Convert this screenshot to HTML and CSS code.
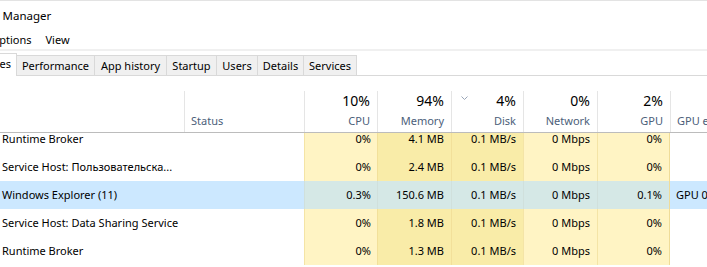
FILE: index.html
```html
<!DOCTYPE html>
<html>
<head>
<meta charset="utf-8">
<title>Task Manager</title>
<link rel="stylesheet" href="styles.css">
</head>
<body>
<div class="viewport">
  <div class="window">
    <div class="titlebar"><span class="title">Task Manager</span></div>
    <div class="menubar">
      <span class="menu">File</span>
      <span class="menu">Options</span>
      <span class="menu">View</span>
    </div>
    <div class="menusep"></div>
    <div class="tabstrip">
      <div class="tab active t-proc">Processes</div>
      <div class="tab t-perf">Performance</div>
      <div class="tab t-hist">App history</div>
      <div class="tab t-start">Startup</div>
      <div class="tab t-users">Users</div>
      <div class="tab t-det">Details</div>
      <div class="tab t-serv">Services</div>
    </div>
    <div class="spacer"></div>

    <div class="grid header">
      <div class="hcell name"></div>
      <div class="hcell status"><span class="label">Status</span></div>
      <div class="hcell num"><span class="pct">10%</span><span class="label">CPU</span></div>
      <div class="hcell num"><span class="pct">94%</span><span class="label">Memory</span></div>
      <div class="hcell num sorted">
        <svg class="sortarrow" width="7" height="4" viewBox="0 0 7 4"><polyline points="0.5,0.5 3.5,3.5 6.5,0.5" fill="none" stroke="#9aa6b8" stroke-width="1"/></svg>
        <span class="pct">4%</span><span class="label">Disk</span>
      </div>
      <div class="hcell num"><span class="pct">0%</span><span class="label">Network</span></div>
      <div class="hcell num"><span class="pct">2%</span><span class="label">GPU</span></div>
      <div class="hcell engine"><span class="label">GPU engine</span></div>
    </div>

    <div class="body">
      <div class="rows">
        <div class="grid row">
          <div class="cell name">Runtime Broker</div>
          <div class="cell status"></div>
          <div class="cell num light cpu">0%</div>
          <div class="cell num dark">4.1 MB</div>
          <div class="cell num dark">0.1 MB/s</div>
          <div class="cell num light">0 Mbps</div>
          <div class="cell num light gpu">0%</div>
          <div class="cell engine"></div>
        </div>
        <div class="grid row">
          <div class="cell name">Service Host: Пользовательска...</div>
          <div class="cell status"></div>
          <div class="cell num light cpu">0%</div>
          <div class="cell num dark">2.4 MB</div>
          <div class="cell num dark">0.1 MB/s</div>
          <div class="cell num light">0 Mbps</div>
          <div class="cell num light gpu">0%</div>
          <div class="cell engine"></div>
        </div>
        <div class="grid row selected">
          <div class="cell name">Windows Explorer (11)</div>
          <div class="cell status"></div>
          <div class="cell num light cpu">0.3%</div>
          <div class="cell num dark">150.6 MB</div>
          <div class="cell num dark">0.1 MB/s</div>
          <div class="cell num light">0 Mbps</div>
          <div class="cell num light gpu">0.1%</div>
          <div class="cell engine">GPU 0 - 3D</div>
        </div>
        <div class="grid row">
          <div class="cell name">Service Host: Data Sharing Service</div>
          <div class="cell status"></div>
          <div class="cell num light cpu">0%</div>
          <div class="cell num dark">1.8 MB</div>
          <div class="cell num dark">0.1 MB/s</div>
          <div class="cell num light">0 Mbps</div>
          <div class="cell num light gpu">0%</div>
          <div class="cell engine"></div>
        </div>
        <div class="grid row">
          <div class="cell name">Runtime Broker</div>
          <div class="cell status"></div>
          <div class="cell num light cpu">0%</div>
          <div class="cell num dark">1.3 MB</div>
          <div class="cell num dark">0.1 MB/s</div>
          <div class="cell num light">0 Mbps</div>
          <div class="cell num light gpu">0%</div>
          <div class="cell engine"></div>
        </div>
      </div>
    </div>
  </div>
</div>
</body>
</html>
```
FILE: styles.css
```css
html, body {
  margin: 0;
  padding: 0;
  background: #ffffff;
}

body {
  font-family: "Noto Sans", "Open Sans", sans-serif;
  font-size: 11px;
  color: #000000;
}

.viewport {
  width: 707px;
  height: 267px;
  overflow: hidden;
}

/* the screenshot is a crop of a wider window */
.window {
  margin-left: -48px;
  width: 820px;
  border-top: 1px solid #e3e3e3;
}

.titlebar {
  height: 29px;
  line-height: 29px;
  padding-left: 24px;
  font-size: 11.5px;
}

.menubar {
  height: 19px;
  line-height: 19px;
  display: flex;
}

.menu {
  padding: 0 7px;
}

.menusep {
  height: 2px;
  background: #f0f0f0;
}

.tabstrip {
  height: 24px;
  display: flex;
  align-items: flex-end;
  border-bottom: 1px solid #d9d9d9;
  padding-left: 2px;
}

.tab {
  box-sizing: border-box;
  height: 20px;
  line-height: 19px;
  text-align: center;
  background: #f0f0f0;
  border-top: 1px solid #d9d9d9;
  border-right: 1px solid #d9d9d9;
  white-space: nowrap;
}

.tab.active {
  height: 23px;
  line-height: 19px;
  margin-bottom: -1px;
  background: #ffffff;
  border-left: 1px solid #d9d9d9;
}

.t-proc { width: 63px; }
.t-perf { width: 78px; }
.t-hist { width: 72px; }
.t-start { width: 50px; }
.t-users { width: 41px; }
.t-det { width: 46px; }
.t-serv { width: 53px; }

.spacer {
  height: 15px;
}

.grid {
  display: grid;
  grid-template-columns: 232px 120px 73px 74px 72px 74px 73px 152px;
}

.header {
  height: 42px;
  box-sizing: border-box;
  border-bottom: 1px solid #bcbcbc;
}

.hcell {
  box-sizing: border-box;
  border-left: 1px solid #e5e5e5;
  display: flex;
  flex-direction: column;
  justify-content: flex-end;
  padding-bottom: 3px;
  position: relative;
}

.hcell.name {
  border-left: none;
}

.hcell.status,
.hcell.engine {
  padding-left: 6px;
}

.hcell.num {
  align-items: flex-end;
  padding-right: 7px;
}

.pct {
  font-size: 14px;
  line-height: 19px;
  margin-bottom: 3px;
  color: #000000;
}

.label {
  color: #4c607a;
  line-height: 16px;
  white-space: nowrap;
}

.sortarrow {
  position: absolute;
  left: 9px;
  top: 5px;
}

.body {
  height: 134px;
  overflow: hidden;
}

.rows {
  margin-top: -8px;
}

.row {
  height: 28px;
}

.cell {
  box-sizing: border-box;
  line-height: 28px;
  white-space: nowrap;
  overflow: hidden;
}

.cell.name {
  padding-left: 50px;
}

.cell.engine {
  padding-left: 6px;
}

.cell.num {
  text-align: right;
  padding-right: 7px;
}

.cell.cpu {
  padding-right: 6px;
}

.cell.light {
  background: #fff4c4;
  border-left: 1px solid #f4e4a6;
}

.cell.dark {
  background: #f9eca8;
  border-left: 1px solid #f2e09a;
}

.cell.gpu {
  border-right: 1px solid #efdc98;
}

.row.selected .cell {
  background: #cce8ff;
}

.row.selected .cell.light,
.row.selected .cell.dark {
  background: #d5e8e6;
  border-left-color: #d0e0dc;
}
```
